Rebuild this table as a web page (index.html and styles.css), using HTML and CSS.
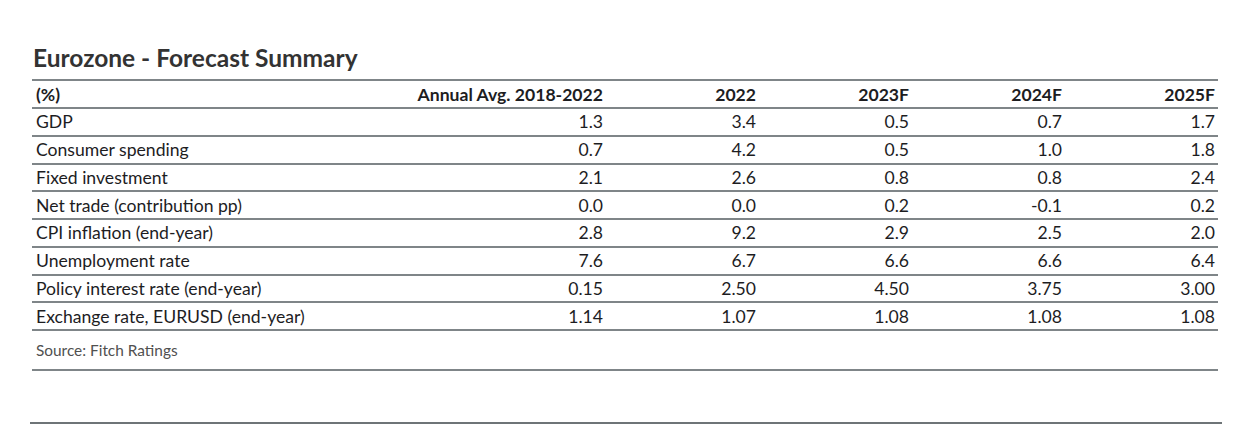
FILE: index.html
```html
<!DOCTYPE html>
<html lang="en">
<head>
<meta charset="utf-8">
<title>Eurozone - Forecast Summary</title>
<link rel="stylesheet" href="styles.css">
</head>
<body>
<div class="page">
  <section class="block">
    <h2 class="title">Eurozone - Forecast Summary</h2>
    <div class="table">
      <div class="row head">
        <div class="cell label">(%)</div>
        <div class="cell num">Annual Avg. 2018-2022</div>
        <div class="cell num">2022</div>
        <div class="cell num">2023F</div>
        <div class="cell num">2024F</div>
        <div class="cell num">2025F</div>
      </div>
      <div class="row">
        <div class="cell label">GDP</div>
        <div class="cell num">1.3</div><div class="cell num">3.4</div><div class="cell num">0.5</div><div class="cell num">0.7</div><div class="cell num">1.7</div>
      </div>
      <div class="row">
        <div class="cell label">Consumer spending</div>
        <div class="cell num">0.7</div><div class="cell num">4.2</div><div class="cell num">0.5</div><div class="cell num">1.0</div><div class="cell num">1.8</div>
      </div>
      <div class="row">
        <div class="cell label">Fixed investment</div>
        <div class="cell num">2.1</div><div class="cell num">2.6</div><div class="cell num">0.8</div><div class="cell num">0.8</div><div class="cell num">2.4</div>
      </div>
      <div class="row">
        <div class="cell label">Net trade (contribution pp)</div>
        <div class="cell num">0.0</div><div class="cell num">0.0</div><div class="cell num">0.2</div><div class="cell num">-0.1</div><div class="cell num">0.2</div>
      </div>
      <div class="row">
        <div class="cell label">CPI inflation (end-year)</div>
        <div class="cell num">2.8</div><div class="cell num">9.2</div><div class="cell num">2.9</div><div class="cell num">2.5</div><div class="cell num">2.0</div>
      </div>
      <div class="row">
        <div class="cell label">Unemployment rate</div>
        <div class="cell num">7.6</div><div class="cell num">6.7</div><div class="cell num">6.6</div><div class="cell num">6.6</div><div class="cell num">6.4</div>
      </div>
      <div class="row">
        <div class="cell label">Policy interest rate (end-year)</div>
        <div class="cell num">0.15</div><div class="cell num">2.50</div><div class="cell num">4.50</div><div class="cell num">3.75</div><div class="cell num">3.00</div>
      </div>
      <div class="row">
        <div class="cell label">Exchange rate, EURUSD (end-year)</div>
        <div class="cell num">1.14</div><div class="cell num">1.07</div><div class="cell num">1.08</div><div class="cell num">1.08</div><div class="cell num">1.08</div>
      </div>
    </div>
    <p class="source">Source: Fitch Ratings</p>
  </section>
  <div class="rule"></div>
</div>
</body>
</html>
```

FILE: styles.css
```css
html, body {
  margin: 0;
  padding: 0;
  background: #ffffff;
}
body {
  font-family: Lato, "Open Sans", "Liberation Sans", sans-serif;
  color: #1d1d1f;
}
.page {
  padding: 43px 0 0 30px;
  width: 1192px;
}
.block {
  margin-left: 2px;
  width: 1186px;
}
.title {
  margin: 0 0 6px 1px;
  font-size: 24.5px;
  line-height: 30px;
  font-weight: 700;
  color: #333333;
}
.table {
  border-top: 2px solid #7f8588;
}
.row {
  display: grid;
  grid-template-columns: 1fr repeat(5, 153px);
  border-bottom: 2px solid #7f8588;
  height: 25.75px;
  align-items: center;
  font-size: 17.6px;
}
.head {
  height: 26px;
}
.head .cell {
  font-weight: 700;
}
.cell {
  white-space: nowrap;
  line-height: 21px;
}
.label {
  padding-left: 4px;
}
.num {
  display: flex;
  justify-content: flex-end;
  padding-right: 3px;
}
.source {
  margin: 0;
  height: 38px;
  padding: 0 0 0 4px;
  display: flex;
  align-items: center;
  font-size: 15.4px;
  color: #505050;
  border-bottom: 2px solid #7f8588;
}
.rule {
  margin-top: 51px;
  height: 2px;
  background: #6e7477;
}
```
